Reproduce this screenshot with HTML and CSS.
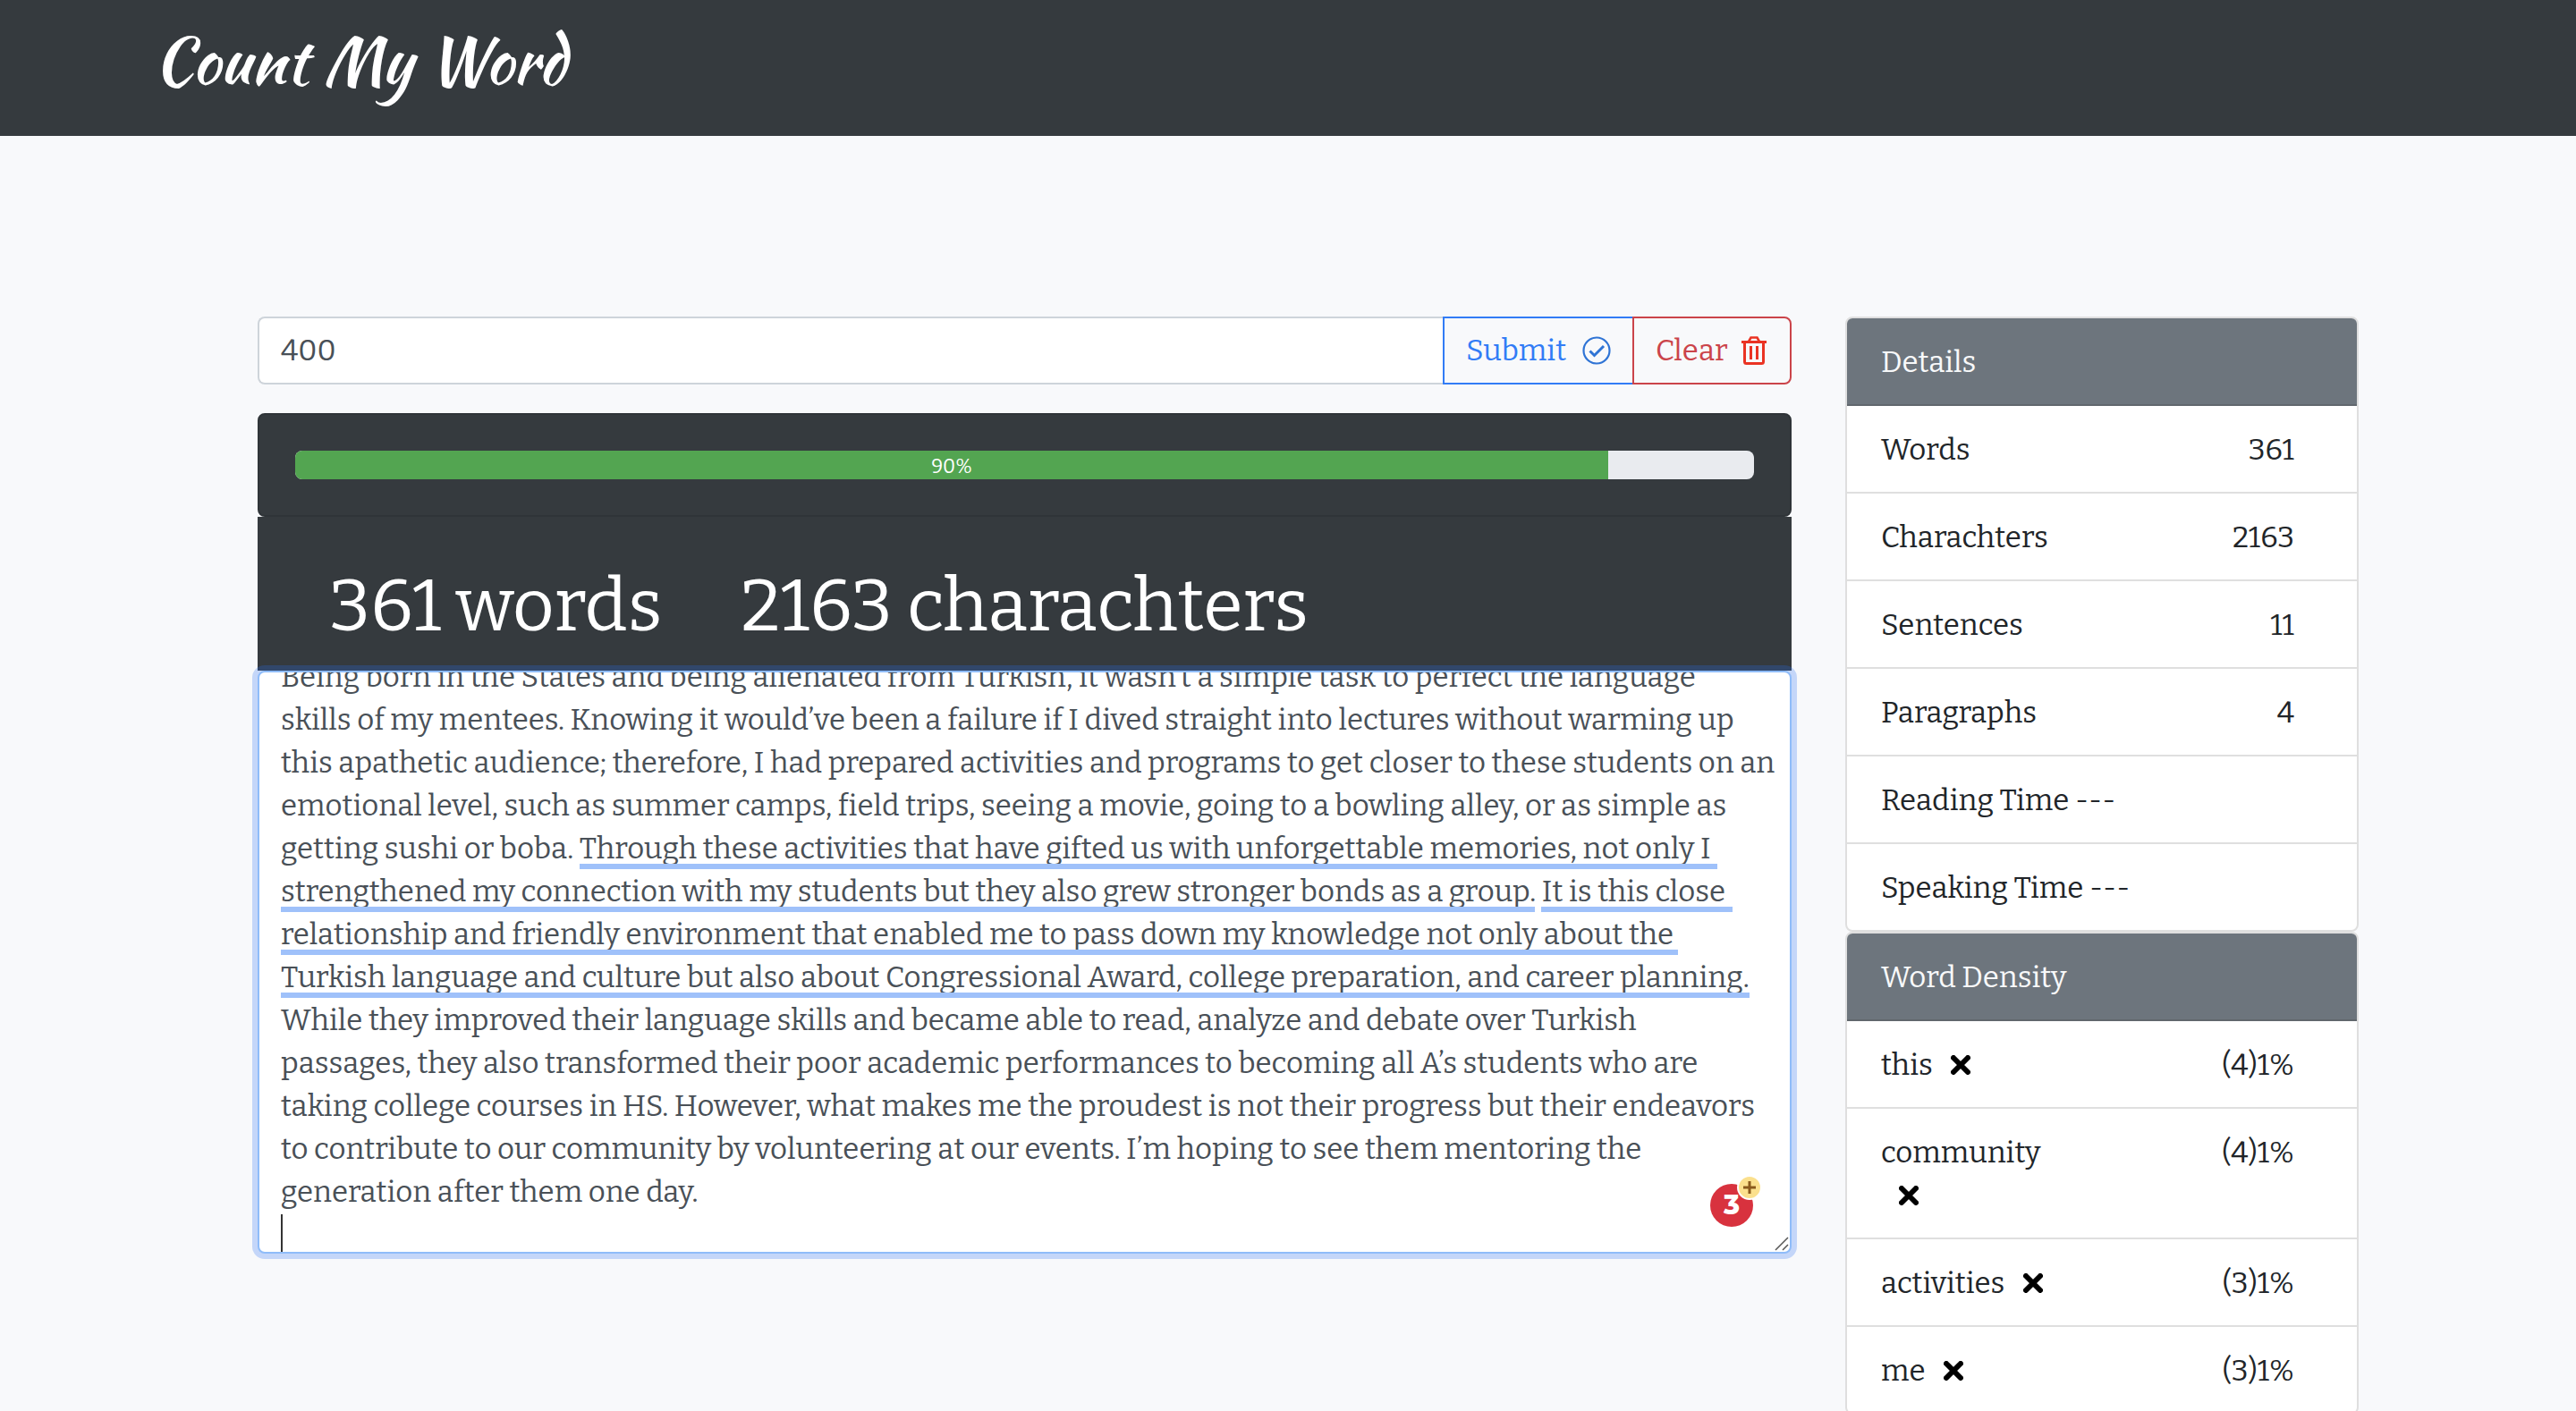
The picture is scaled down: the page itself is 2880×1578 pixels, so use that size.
FILE: index.html
```html
<!DOCTYPE html>
<html lang="en">
<head>
<meta charset="utf-8">
<meta name="viewport" content="width=device-width, initial-scale=1">
<title>Count My Word</title>
<link rel="stylesheet" href="styles.css">
</head>
<body>
<svg class="sprite" aria-hidden="true">
  <symbol id="remove" viewBox="0 0 22 22"><path d="M3 3 19 19M19 3 3 19" fill="none" stroke="#000" stroke-width="6" stroke-linecap="round"/></symbol>
</svg>
<header class="navbar"><a class="brand" href="#">Count My Word</a></header>
<main class="page">
  <section class="workspace">
    <form class="goal">
      <input class="goal-input" type="text" value="400" aria-label="Word goal">
      <button class="btn btn-submit" type="button">Submit
        <svg class="icon" viewBox="0 0 32 32" aria-hidden="true"><g fill="none" stroke="#2f74d5"><circle cx="16" cy="16" r="14.5" stroke-width="2.2"/><path d="m8.500 16.500 5 5L24 11" stroke-width="3"/></g></svg>
      </button>
      <button class="btn btn-clear" type="button">Clear
        <svg class="icon" viewBox="0 0 32 32" aria-hidden="true"><g fill="none" stroke="#ea3323"><path d="M2 6.500h28" stroke-width="3"/><path d="M10 6 12.500 1.500h7L22 6" stroke-width="2.600"/><path d="M5.500 7v21.500q0 2 2 2h17q2 0 2-2V7" stroke-width="3"/><path d="M12.500 11v15M19.500 11v15" stroke-width="3"/></g></svg>
      </button>
    </form>
    <div class="progress-card">
      <div class="progress" role="progressbar" aria-valuenow="90" aria-valuemin="0" aria-valuemax="100" aria-label="Goal progress">
        <div class="progress-bar" style="width: 90%">90%</div>
      </div>
    </div>
    <div class="totals"><h1>361 words</h1><h1>2163 charachters</h1></div>
    <div class="editor">
      <textarea class="essay" id="essay" rows="13" spellcheck="false" aria-label="Your text">Being born in the States and being alienated from Turkish, it wasn’t a simple task to perfect the language
skills of my mentees. Knowing it would’ve been a failure if I dived straight into lectures without warming up
this apathetic audience; therefore, I had prepared activities and programs to get closer to these students on an
emotional level, such as summer camps, field trips, seeing a movie, going to a bowling alley, or as simple as
getting sushi or boba. Through these activities that have gifted us with unforgettable memories, not only I
strengthened my connection with my students but they also grew stronger bonds as a group. It is this close
relationship and friendly environment that enabled me to pass down my knowledge not only about the
Turkish language and culture but also about Congressional Award, college preparation, and career planning.
While they improved their language skills and became able to read, analyze and debate over Turkish
passages, they also transformed their poor academic performances to becoming all A’s students who are
taking college courses in HS. However, what makes me the proudest is not their progress but their endeavors
to contribute to our community by volunteering at our events. I’m hoping to see them mentoring the
generation after them one day.
</textarea>
      <span class="mark mark-1"></span>
      <span class="mark mark-2"></span>
      <span class="mark mark-3"></span>
      <span class="mark mark-4"></span>
      <span class="mark mark-5"></span>
      <span class="caret"></span>
      <button class="alerts" type="button" aria-label="3 suggestions">3<svg class="alerts-plus" viewBox="0 0 28 28" aria-hidden="true"><circle cx="14" cy="14" r="13" fill="#fbe08d" stroke="#fff" stroke-width="2"/><path d="M14 7v14M7 14h14" stroke="#8a5a1c" stroke-width="3"/></svg></button>
      <svg class="grip" viewBox="0 0 16 16" aria-hidden="true"><path d="M1 15 15 1M9 15l6-6" stroke="#555" stroke-width="1.500"/></svg>
    </div>
  </section>
  <aside class="sidebar">
    <section class="card">
      <h2 class="card-header">Details</h2>
      <ul class="list">
        <li><span>Words</span><span>361</span></li>
        <li><span>Charachters</span><span>2163</span></li>
        <li><span>Sentences</span><span>11</span></li>
        <li><span>Paragraphs</span><span>4</span></li>
        <li><span>Reading Time ---</span></li>
        <li><span>Speaking Time ---</span></li>
      </ul>
    </section>
    <section class="card">
      <h2 class="card-header">Word Density</h2>
      <ul class="list density">
        <li><span>this <button class="remove" type="button" aria-label="Remove this"><svg><use href="#remove"/></svg></button></span><span>(4)1%</span></li>
        <li><span>community <button class="remove" type="button" aria-label="Remove community"><svg><use href="#remove"/></svg></button></span><span>(4)1%</span></li>
        <li><span>activities <button class="remove" type="button" aria-label="Remove activities"><svg><use href="#remove"/></svg></button></span><span>(3)1%</span></li>
        <li><span>me <button class="remove" type="button" aria-label="Remove me"><svg><use href="#remove"/></svg></button></span><span>(3)1%</span></li>
      </ul>
    </section>
  </aside>
</main>
<script src="script.js"></script>
</body>
</html>
```
FILE: script.js
```js
document.getElementById('essay').scrollTop = 31;
```
FILE: styles.css
```css
* { box-sizing: border-box; }
html { overflow-x: hidden; }
body {
  margin: 0;
  background: #f8f9fb;
  color: #212529;
  font-family: "Roboto Slab", Bitter, "DejaVu Serif Condensed", serif;
  font-size: 33px;
  font-weight: 450;
  line-height: 48px;
}
button, input, textarea { font: inherit; margin: 0; }
h1, h2, ul { margin: 0; padding: 0; font-weight: 450; }
.sprite { display: none; }
.navbar {
  display: flex;
  align-items: center;
  height: 152px;
  padding: 0 172px 16px;
  background: #353a3e;
}
.brand {
  color: #fff;
  font: 400 71px/96px "Kaushan Script", Lato, cursive;
  text-decoration: none;
}
.page {
  display: grid;
  grid-template-columns: minmax(0, 1fr) 574px;
  gap: 60px;
  align-items: start;
  padding: 202px 243px 0 288px;
  height: calc(100vh - 152px);
  overflow: hidden;
}
.goal { display: flex; height: 76px; margin-bottom: 32px; }
.goal-input {
  flex: 1;
  min-width: 0;
  padding: 0 24px;
  border: 2px solid #ced4da;
  border-right: 0;
  border-radius: 8px 0 0 8px;
  background: #fff;
  color: #495057;
}
.btn {
  display: flex;
  align-items: center;
  justify-content: space-between;
  padding: 0 24px;
  border: 2px solid;
  background: transparent;
}
.btn-submit { width: 212px; border-color: #327cf6; color: #327cf6; border-right: 0; }
.btn-clear { width: 178px; border-color: #cb444a; color: #cb444a; border-radius: 0 8px 8px 0; }
.icon { width: 32px; height: 32px; }
.progress-card {
  padding: 40px;
  border: 2px solid #2f3438;
  border-radius: 8px;
  background: #353a3e;
}
.progress {
  height: 32px;
  overflow: hidden;
  border-radius: 8px;
  background: #e9ebef;
}
.progress-bar {
  height: 32px;
  background: #53a551;
  color: #fff;
  font-size: 22px;
  line-height: 36px;
  text-align: center;
}
.totals {
  display: flex;
  gap: 88px;
  height: 172px;
  padding: 52px 80px 0;
  background: #353a3e;
  color: #fff;
}
.totals h1 { font-size: 81px; line-height: 96px; white-space: nowrap; }
.editor { position: relative; }
.essay {
  display: block;
  width: 100%;
  height: 652px;
  padding: 12px 24px;
  overflow: hidden;
  border: 2px solid #8fbcf9;
  border-radius: 8px;
  outline: 0;
  box-shadow: 0 0 0 6px rgba(38, 112, 245, .25);
  background: #fff;
  color: #495057;
  resize: none;
  white-space: pre;
}
.mark { position: absolute; left: 26px; height: 6px; background: #9fc1fa; }
.mark-1 { top: 216px; left: 360px; width: 1272px; }
.mark-2 { top: 264px; width: 1402px; }
.mark-3 { top: 264px; left: 1435px; width: 214px; }
.mark-4 { top: 312px; width: 1562px; }
.mark-5 { top: 360px; width: 1642px; }
.caret { position: absolute; left: 26px; top: 608px; width: 2px; height: 42px; background: #333; }
.alerts {
  position: absolute;
  right: 43px;
  bottom: 30px;
  width: 48px;
  height: 48px;
  padding: 0;
  border: 0;
  border-radius: 50%;
  background: #d8323e;
  color: #fff;
  font: 800 30px/48px Montserrat, Inter, sans-serif;
}
.alerts-plus { position: absolute; top: -10px; right: -10px; width: 28px; height: 28px; }
.grip { position: absolute; right: 3px; bottom: 3px; width: 16px; height: 16px; }
.card { border: 2px solid #dfdfdf; border-radius: 8px; background: #fff; overflow: hidden; }
.card-header {
  padding: 25px 38px 23px;
  border-bottom: 2px solid #61676d;
  background: #6d757d;
  color: #f8f9fa;
  font-size: 33px;
  line-height: 48px;
}
.list { list-style: none; }
.list li {
  display: flex;
  justify-content: space-between;
  padding: 25px 70px 23px 38px;
  border-bottom: 2px solid #dfdfdf;
}
.list li:last-child { border-bottom: 0; }
.density span:first-child { width: 200px; }
.remove {
  height: 24px;
  padding: 0 0 0 14px;
  border: 0;
  background: none;
  line-height: 0;
}
.density li:nth-child(2) .remove { padding-left: 20px; }
.remove svg { width: 22px; height: 22px; }
```
